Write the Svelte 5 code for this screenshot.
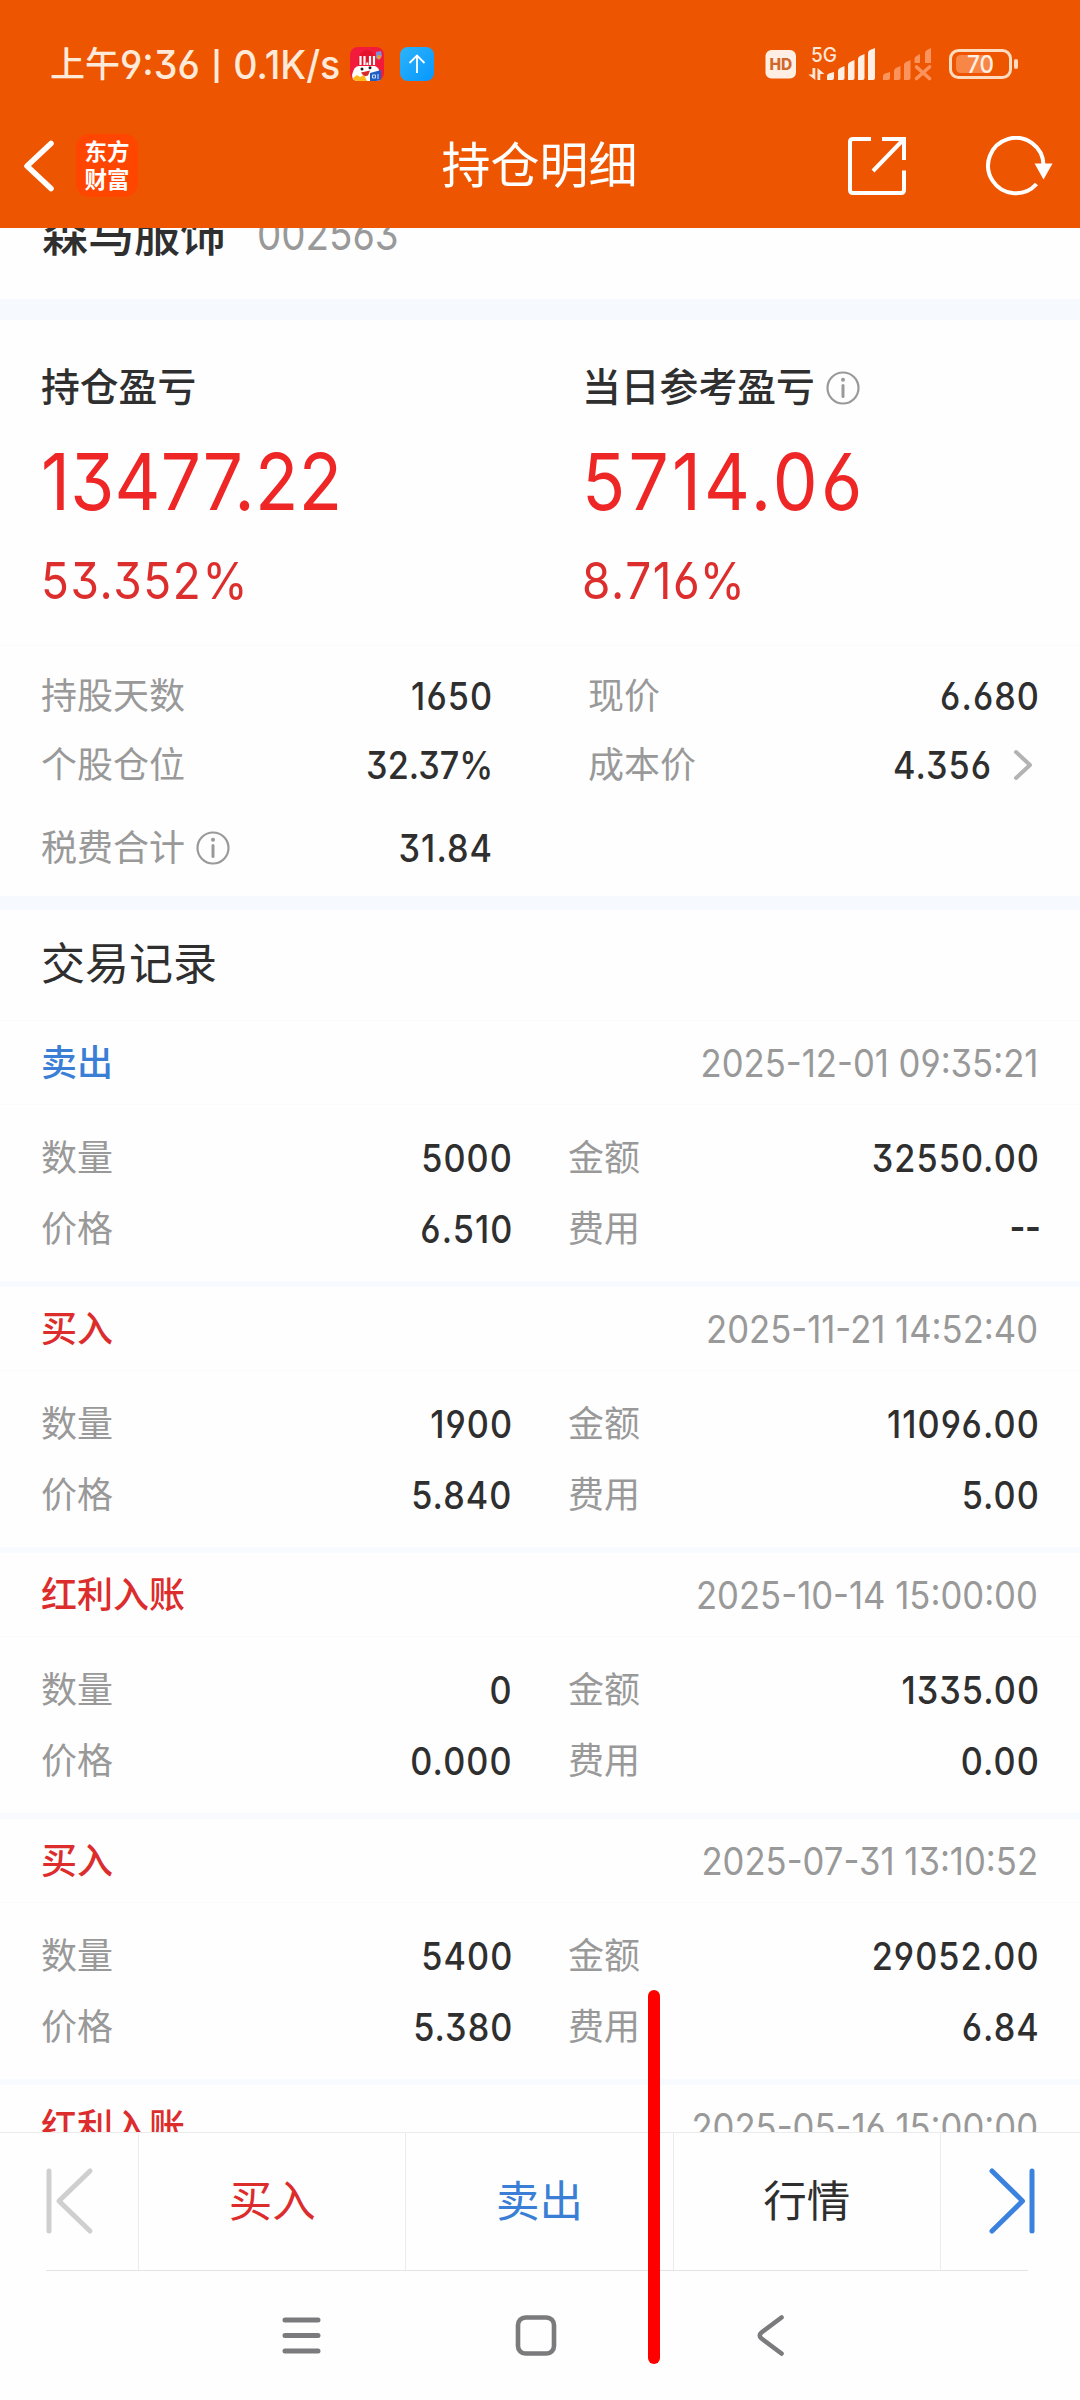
<script lang="ts">
    interface Trade {
        kind: string;
        side: "buy" | "sell";
        time: string;
        count: string;
        amount: string;
        price: string;
        fee: string;
    }

    const trades: Trade[] = [
        {kind: "卖出", side: "sell", time: "2025-12-01 09:35:21", count: "5000", amount: "32550.00", price: "6.510", fee: "--"},
        {kind: "买入", side: "buy", time: "2025-11-21 14:52:40", count: "1900", amount: "11096.00", price: "5.840", fee: "5.00"},
        {kind: "红利入账", side: "buy", time: "2025-10-14 15:00:00", count: "0", amount: "1335.00", price: "0.000", fee: "0.00"},
        {kind: "买入", side: "buy", time: "2025-07-31 13:10:52", count: "5400", amount: "29052.00", price: "5.380", fee: "6.84"},
    ];

    // Last record, only its heading shows above the bottom bar
    const next = {kind: "红利入账", side: "buy", time: "2025-05-16 15:00:00"};
</script>

{#snippet info()}
    <svg class="info" width="34" height="34" viewBox="0 0 34 34" aria-hidden="true">
        <circle cx="17" cy="17" r="15.5" fill="none" stroke="#999" stroke-width="2.2" />
        <circle cx="17" cy="8.8" r="2" fill="#999" />
        <path d="M17 14.5V25.5" stroke="#999" stroke-width="3" stroke-linecap="round" />
    </svg>
{/snippet}

{#snippet head(kind: string, side: string, time: string)}
    <div class="trade-head">
        <span class="kind {side}">{kind}</span>
        <span class="num time">{time}</span>
    </div>
{/snippet}

<div class="screen">
    <header>
        <div class="status">
            <span class="clock">上午<span class="clock-num">9:36 <i class="bar"></i> 0.1K/s</span></span>
            <svg class="app-icon" width="34" height="34" viewBox="0 0 34 34">
                <defs>
                    <clipPath id="tile"><rect width="34" height="34" rx="8" /></clipPath>
                </defs>
                <g clip-path="url(#tile)">
                    <rect width="34" height="34" fill="#f21b3c" />
                    <path d="M8 18Q8 4 17 3Q26 4 26 18z" fill="#e5122b" />
                    <path d="M26 5l5-1 1 5-3 4-3-2z" fill="#7b8fd8" />
                    <circle cx="29" cy="10" r="2" fill="#f59a1c" />
                    <path d="M10.500 9v9M14.500 9v9M20 9v9M24 9v9" stroke="#fff" stroke-width="2.200" />
                    <rect x="16.300" y="15.500" width="2" height="2.500" fill="#fff" />
                    <path d="M2 28Q4 19 9 19H25Q29 20 30 27V34H3z" fill="#fff" />
                    <circle cx="12" cy="22" r="1.500" fill="#222" />
                    <circle cx="20" cy="20.800" r="1.500" fill="#222" />
                    <path d="M11 25.500l9-2-2 5-4 1z" fill="#d92b2b" />
                    <path d="M3 31l4-3 3 2 4-2 3 6H4z" fill="#ffb81a" />
                    <path d="M20 26l11-3v11H20z" fill="#1f5fc4" />
                    <path d="M22.500 28h3v3h-3zM28 27v5" fill="none" stroke="#cfe0ff" stroke-width="1" />
                </g>
            </svg>
            <svg class="app-icon upload" width="34" height="34" viewBox="0 0 34 34">
                <defs>
                    <linearGradient id="sky" x1="0" y1="0" x2="1" y2="1">
                        <stop offset="0" stop-color="#2cb3fa" />
                        <stop offset="1" stop-color="#0798ff" />
                    </linearGradient>
                </defs>
                <rect width="34" height="34" rx="8" fill="url(#sky)" />
                <path d="M17 26V9M9.500 16L17 8.500L24.500 16" fill="none" stroke="#fff" stroke-width="1.800" />
            </svg>

            <svg class="signals" width="254" height="36" viewBox="765 46 254 36">
                <rect x="765.500" y="50" width="30.500" height="28.500" rx="6" fill="#ffeee4" />
                <text x="780.800" y="69.500" font-size="15.500" font-weight="800" text-anchor="middle" fill="#d0672c">HD</text>
                <text x="811" y="62" font-size="20" font-weight="500" textLength="26" lengthAdjust="spacingAndGlyphs" fill="#ffe7d8">5G</text>
                <path d="M812.500 68h2.800v12l-7-5.500h4.200zM817.500 80h2.800v-6h4.200l-7-6z" fill="#ffe7d8" />
                <g fill="#ffeee4">
                    <path d="M827 80v-4q0-2 2-2.500l5-1.500v6q0 2-2 2z" />
                    <path d="M838 80V71q0-2 2-3l4.500-2V78q0 2-2 2z" />
                    <path d="M848 80V65q0-2 2-3l4.500-2V78q0 2-2 2z" />
                    <path d="M858 80V59q0-2 2-3l4.500-2V78q0 2-2 2z" />
                    <path d="M868 80V53q0-2 2-3l5-2V78q0 2-2 2z" />
                </g>
                <g fill="#fb935c">
                    <path d="M883 80v-4q0-2 2-2.500l5-1.500v6q0 2-2 2z" />
                    <path d="M894 80V71q0-2 2-3l4.500-2V78q0 2-2 2z" />
                    <path d="M904 80V65q0-2 2-3l4.500-2V78q0 2-2 2z" />
                    <path d="M914.500 63v-4q0-2 2-3l3.500-2v9z" />
                    <path d="M925 63V53q0-2 2-3l4-2v15z" />
                </g>
                <path d="M916.500 67L929.500 78.500M929.500 67L916.500 78.500" stroke="#fb935c" stroke-width="3.600" stroke-linecap="round" />
                <rect x="950.500" y="50.500" width="60" height="27" rx="8" fill="none" stroke="#ffdcc0" stroke-width="3" />
                <path d="M961 55H990V73H961Q956 73 956 68V60Q956 55 961 55z" fill="#f78647" />
                <rect x="1014" y="59" width="4" height="10" rx="2" fill="#ffdcc0" />
                <text x="980.500" y="73" font-size="24" font-weight="500" text-anchor="middle" textLength="27" lengthAdjust="spacingAndGlyphs" fill="#fff0e4">70</text>
            </svg>
        </div>

        <div class="titlebar">
            <div class="left">
                <svg width="34" height="56" viewBox="0 0 34 56"><path d="M30 5.500L6 28L30 50.500" fill="none" stroke="#fff" stroke-width="5.500" stroke-linecap="round" stroke-linejoin="round" /></svg>
                <div class="logo"><span>东方</span><span>财富</span></div>
            </div>
            <h1>持仓明细</h1>
            <div class="right">
                <svg width="60" height="60" viewBox="0 0 60 60" fill="none" stroke="#fff" stroke-width="4">
                    <path d="M24 3H6Q3 3 3 6V54Q3 57 6 57H54Q57 57 57 54V34.500" />
                    <path d="M35 3H57V24M56 4L26 35" />
                </svg>
                <svg width="68" height="60" viewBox="0 0 68 60">
                    <path d="M50.500 48A27.700 27.700 0 1 1 57.500 29" fill="none" stroke="#fff" stroke-width="4" />
                    <path d="M48.500 27.500H66.500L57.500 43.500z" fill="#fff" />
                </svg>
            </div>
        </div>
    </header>

    <main>
        <div class="stock"><b>森马服饰</b><span class="num code">002563</span></div>
        <div class="band wide"></div>

        <section class="profit">
            <div class="profit-col">
                <div class="caption">持仓盈亏</div>
                <div class="big"><span class="num">13477.22</span></div>
                <div class="pct"><span class="num">53.352%</span></div>
            </div>
            <div class="profit-col">
                <div class="caption">当日参考盈亏{@render info()}</div>
                <div class="big"><span class="num loose">5714.06</span></div>
                <div class="pct"><span class="num">8.716%</span></div>
            </div>
        </section>

        <section class="stats">
            <div class="row">
                <div class="cell"><span class="label">持股天数</span><span class="num val">1650</span></div>
                <div class="cell"><span class="label">现价</span><span class="num val">6.680</span></div>
            </div>
            <div class="row">
                <div class="cell"><span class="label">个股仓位</span><span class="num val tight">32.37%</span></div>
                <div class="cell">
                    <span class="label">成本价</span><span class="num val">4.356</span>
                    <svg class="more" width="26" height="34" viewBox="0 0 26 34"><path d="M5 4L19 17L5 30" fill="none" stroke="#b3b3b3" stroke-width="4" stroke-linecap="round" stroke-linejoin="round" /></svg>
                </div>
            </div>
            <div class="row tall">
                <div class="cell"><span class="label">税费合计</span>{@render info()}<span class="num val">31.84</span></div>
                <div class="cell"></div>
            </div>
        </section>
        <div class="band"></div>

        <h2>交易记录</h2>
        {#each trades as trade (trade.time)}
            <article>
                {@render head(trade.kind, trade.side, trade.time)}
                <div class="trade-body">
                    <div class="trade-row">
                        <div class="cell"><span class="label">数量</span><span class="num val">{trade.count}</span></div>
                        <div class="cell"><span class="label">金额</span><span class="num val">{trade.amount}</span></div>
                    </div>
                    <div class="trade-row">
                        <div class="cell"><span class="label">价格</span><span class="num val">{trade.price}</span></div>
                        <div class="cell"><span class="label">费用</span><span class="num val" class:none={trade.fee === "--"}>{trade.fee}</span></div>
                    </div>
                </div>
            </article>
        {/each}
        {@render head(next.kind, next.side, next.time)}
    </main>

    <footer>
        <button class="edge" aria-label="Previous">
            <svg width="52" height="70" viewBox="0 0 52 70" fill="none" stroke="#cfcfcf" stroke-width="5" stroke-linecap="round" stroke-linejoin="round">
                <path d="M5 4V64M46 4L15 34L46 64" />
            </svg>
        </button>
        <button class="buy">买入</button>
        <button class="sell">卖出</button>
        <button>行情</button>
        <button class="edge last" aria-label="Next">
            <svg width="52" height="70" viewBox="0 0 52 70" fill="none" stroke="#3b82de" stroke-width="5" stroke-linecap="round" stroke-linejoin="round">
                <path d="M47 4V64M7 4L37.500 34L7 64" />
            </svg>
        </button>
    </footer>

    <nav>
        <svg width="44" height="44" viewBox="0 0 44 44" stroke="#7b7b7d" stroke-width="5" stroke-linecap="round">
            <path d="M6 6H39M6 21.500H39M6 37H39" />
        </svg>
        <svg width="44" height="44" viewBox="0 0 44 44" fill="none" stroke="#7b7b7d" stroke-width="4.600">
            <rect x="4" y="3.500" width="36" height="36" rx="7.500" />
        </svg>
        <svg width="44" height="44" viewBox="0 0 44 44" fill="none" stroke="#7b7b7d" stroke-width="4.600" stroke-linecap="round">
            <path d="M32.500 3.500L12.500 18.500Q9 21.500 12.500 24.500L32.500 39.500" />
        </svg>
    </nav>

    <!-- marker stroke drawn over the page -->
    <div class="marker"></div>
</div>

<style>
:global(body) {
    margin: 0;
}

.screen {
    position: relative;
    width: 1080px;
    height: 2400px;
    display: flex;
    flex-direction: column;
    overflow: hidden;
    background: #fefefe;
    color: #2f2f2f;
    font-family: Inter, "Noto Sans CJK SC", sans-serif;
    font-size: 36px;
    line-height: 1;
}

header {
    height: 228px;
    flex-shrink: 0;
    background: #ed5500;
    color: #fff;
}

.status {
    display: flex;
    align-items: center;
    height: 128px;
    padding: 0 61px 0 50px;
}

.clock {
    width: 300px;
    display: flex;
    align-items: center;
    font-size: 35px;
    font-weight: 500;
    color: #ffe9d9;
    white-space: pre;
}

.clock-num {
    font-feature-settings: "cv03", "cv04", "cv09";
    font-size: 39px;
    transform: scaleX(0.965);
    transform-origin: left center;
}

.bar {
    display: inline-block;
    width: 4px;
    height: 34px;
    margin: 0 5px;
    vertical-align: -4px;
    background: currentColor;
}

.upload {
    margin-left: 16px;
}

.signals {
    margin-left: auto;
}

.titlebar {
    display: flex;
    align-items: center;
    justify-content: space-between;
    height: 75px;
    padding: 0 26px 0 21px;
}

.left,
.right {
    width: 210px;
    display: flex;
    align-items: center;
}

.left {
    gap: 21px;
}

.right {
    justify-content: flex-end;
    gap: 79px;
}

.logo {
    width: 62px;
    height: 63px;
    box-sizing: border-box;
    padding-top: 5px;
    display: flex;
    flex-direction: column;
    align-items: center;
    gap: 5px;
    border-radius: 14px;
    background: #ff4600;
    font-family: "Noto Sans CJK SC", sans-serif;
    font-size: 22.5px;
    font-weight: 700;
}

h1 {
    margin: 0;
    padding-left: 4px;
    font-size: 49px;
    font-weight: 400;
}

main {
    height: 1904px;
    flex-shrink: 0;
    display: flex;
    flex-direction: column;
    overflow: hidden;
}

main > :global(*) {
    flex-shrink: 0;
}

/* Digits are set a little narrower than the face's default */
.num {
    display: inline-block;
    white-space: pre;
    font-feature-settings: "cv03", "cv04", "cv09";
    transform: scaleX(0.9);
    transform-origin: left center;
}

.stock {
    display: flex;
    align-items: center;
    height: 60px;
    margin-top: -24px;
    padding: 0 42px 35px;
}

.stock b {
    font-size: 46px;
    font-weight: 500;
}

.code {
    margin-left: 31px;
    font-size: 44px;
    color: #999;
    transform: scaleX(0.875);
}

.band {
    height: 14px;
    background: #f6f9fe;
}

.band.wide {
    height: 21px;
}

.profit {
    display: flex;
    height: 326px;
    box-sizing: border-box;
    padding: 44px 0 0 41px;
    border-bottom: 1px solid #fafafa;
}

.profit-col {
    width: 541px;
    flex-shrink: 0;
}

.caption {
    display: flex;
    align-items: center;
    height: 47px;
    margin-bottom: 1px;
    font-size: 38.8px;
    font-weight: 500;
}

.info {
    margin-left: 11px;
}

.big,
.pct {
    display: flex;
    align-items: center;
    color: #ee2626;
}

.big {
    height: 100px;
    margin-top: 20px;
    font-size: 79px;
    letter-spacing: 0.3px;
}

.big .loose {
    letter-spacing: 3.6px;
}

.pct {
    height: 60px;
    margin-top: 19px;
    font-size: 51px;
    letter-spacing: 1.8px;
    color: #dd2e2e;
}

.stats {
    height: 250px;
    box-sizing: border-box;
    padding: 15px 42px 0 41px;
}

.row,
.trade-row {
    display: flex;
    height: 69px;
}

.row.tall {
    height: 97px;
}

.cell {
    display: flex;
    align-items: center;
}

.row .cell:first-child {
    width: 450px;
    margin-right: 97px;
}

.row .cell:last-child {
    flex: 1;
}

.label {
    color: #999;
}

.val {
    margin-left: auto;
    margin-right: -2px;
    font-size: 38px;
    font-weight: 500;
    letter-spacing: 1.2px;
    transform-origin: right center;
}

.val.tight {
    letter-spacing: 0;
}

.val.none {
    letter-spacing: -0.5px;
    font-weight: 600;
    padding-bottom: 4px;
}

.more {
    margin: 0 1px 0 21px;
}

h2 {
    box-sizing: border-box;
    height: 111px;
    margin: 0;
    padding-left: 41px;
    border-bottom: 1px solid #fafafa;
    font-size: 44px;
    font-weight: 400;
    line-height: 108px;
}

article {
    height: 260px;
    border-bottom: 6px solid #f7fafe;
}

.trade-head {
    display: flex;
    align-items: center;
    justify-content: space-between;
    box-sizing: border-box;
    height: 84px;
    padding: 0 42px 0 41px;
    border-bottom: 1px solid #fafafa;
}

.kind {
    font-weight: 500;
}

.buy {
    color: #dc2c2c;
}

.sell {
    color: #3a7fd5;
}

.time {
    font-size: 38px;
    color: #999;
    transform: scaleX(0.912);
    transform-origin: right center;
}

.trade-body {
    padding: 17px 42px 0 41px;
}

.trade-row {
    height: 71px;
}

.trade-row .cell:first-child {
    width: 470px;
    margin-right: 57px;
}

.trade-row .cell:last-child {
    flex: 1;
}

footer {
    display: flex;
    box-sizing: border-box;
    height: 139px;
    flex-shrink: 0;
    border-top: 1px solid #ebebeb;
    background: linear-gradient(#e4e4e4, #e4e4e4) 46px 100% / 982px 1px no-repeat;
}

footer button {
    flex: 1;
    margin: 0 0 1px;
    padding: 0;
    border: none;
    border-right: 1px solid #ebebeb;
    background: none;
    font: inherit;
    font-size: 43.5px;
    color: #2f2f2f;
}

footer button.buy {
    color: #dc2c2c;
}

footer button.sell {
    color: #3a7fd5;
}

footer .edge {
    flex: 0 0 139px;
    display: flex;
    align-items: center;
    padding-left: 44px;
}

footer .last {
    border-right: none;
}

nav {
    display: flex;
    align-items: center;
    gap: 191px;
    height: 129px;
    padding-left: 279px;
}

.marker {
    position: absolute;
    left: 648px;
    top: 1990px;
    width: 11.5px;
    height: 374px;
    border-radius: 6px;
    background: #fe0000;
}
</style>
